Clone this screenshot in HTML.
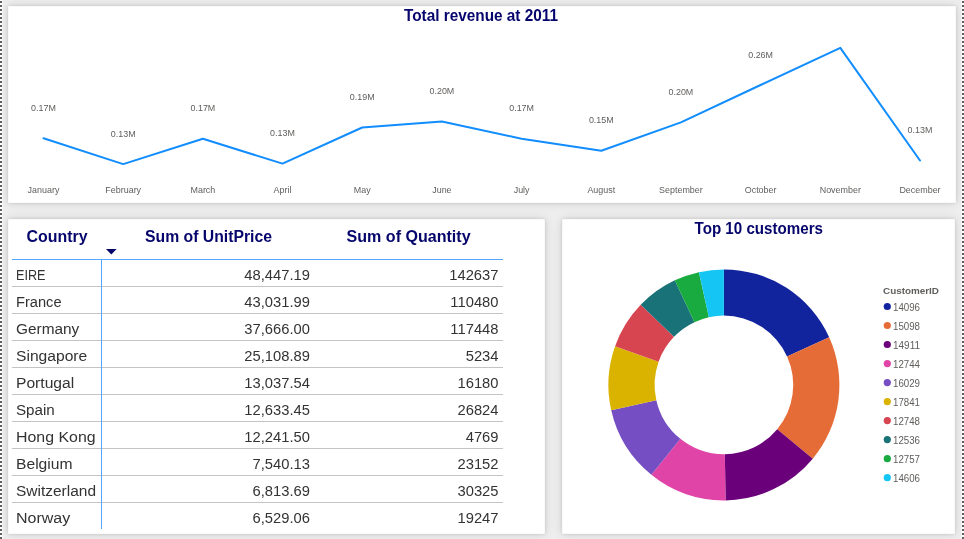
<!DOCTYPE html>
<html><head><meta charset="utf-8"><style>
html,body{margin:0;padding:0;}
body{width:964px;height:539px;overflow:hidden;background:#eeeeee;position:relative;font-family:"Liberation Sans",sans-serif;}
.dash{position:absolute;top:0;width:2px;height:539px;background:repeating-linear-gradient(to bottom,#fff 0,#fff 1px,#606060 1px,#606060 3px,#fff 3px,#fff 4px);}
.card{position:absolute;background:#fff;box-shadow:0 0 3px rgba(0,0,0,0.12),0 0 10px rgba(0,0,0,0.12),inset 0 0 1px rgba(0,0,0,0.25);}
svg{position:absolute;left:0;top:0;will-change:transform;}
</style></head><body>
<div class="dash" style="left:0"></div>
<div class="dash" style="left:962px"></div>
<div style="position:absolute;top:0;left:2px;width:1px;height:539px;background:rgba(255,255,255,0.55)"></div>
<div style="position:absolute;top:0;left:961px;width:1px;height:539px;background:rgba(255,255,255,0.55)"></div>
<div class="card" style="left:8px;top:6px;width:948px;height:197px"></div>
<div class="card" style="left:8px;top:219px;width:537px;height:315px"></div>
<div class="card" style="left:562px;top:219px;width:393px;height:315px"></div>
<svg width="964" height="539" viewBox="0 0 964 539" font-family="Liberation Sans">
<text x="404" y="20.6" font-weight="bold" font-size="17" fill="#05056c" textLength="154" lengthAdjust="spacingAndGlyphs">Total revenue at 2011</text>
<polyline points="43.5,138.2 123.2,164.1 202.9,138.8 282.5,163.6 362.2,127.5 441.9,121.5 521.6,138.8 601.3,150.8 680.9,122.4 760.6,85.0 840.3,47.8 920.0,160.5" fill="none" stroke="#118dff" stroke-width="2" stroke-linejoin="round" stroke-linecap="round"/>
<g font-size="9.6" fill="#605e5c" text-anchor="middle"><text transform="translate(43.5 110.70) scale(0.93 1)">0.17M</text><text transform="translate(123.2 136.60) scale(0.93 1)">0.13M</text><text transform="translate(202.9 111.30) scale(0.93 1)">0.17M</text><text transform="translate(282.5 136.10) scale(0.93 1)">0.13M</text><text transform="translate(362.2 100.00) scale(0.93 1)">0.19M</text><text transform="translate(441.9 94.00) scale(0.93 1)">0.20M</text><text transform="translate(521.6 111.30) scale(0.93 1)">0.17M</text><text transform="translate(601.3 123.30) scale(0.93 1)">0.15M</text><text transform="translate(680.9 94.90) scale(0.93 1)">0.20M</text><text transform="translate(760.6 57.50) scale(0.93 1)">0.26M</text><text transform="translate(920.0 133.00) scale(0.93 1)">0.13M</text><text transform="translate(43.5 193) scale(0.93 1)">January</text><text transform="translate(123.2 193) scale(0.93 1)">February</text><text transform="translate(202.9 193) scale(0.93 1)">March</text><text transform="translate(282.5 193) scale(0.93 1)">April</text><text transform="translate(362.2 193) scale(0.93 1)">May</text><text transform="translate(441.9 193) scale(0.93 1)">June</text><text transform="translate(521.6 193) scale(0.93 1)">July</text><text transform="translate(601.3 193) scale(0.93 1)">August</text><text transform="translate(680.9 193) scale(0.93 1)">September</text><text transform="translate(760.6 193) scale(0.93 1)">October</text><text transform="translate(840.3 193) scale(0.93 1)">November</text><text transform="translate(920.0 193) scale(0.93 1)">December</text></g>
<g font-weight="bold" font-size="16" fill="#05056c">
<text x="26.5" y="241.8" textLength="61" lengthAdjust="spacingAndGlyphs">Country</text><text x="145" y="241.8" textLength="127" lengthAdjust="spacingAndGlyphs">Sum of UnitPrice</text><text x="346.6" y="241.8" textLength="124" lengthAdjust="spacingAndGlyphs">Sum of Quantity</text></g>
<path d="M106 249L116.6 249L111.3 254.4Z" fill="#05056c"/>
<g stroke="#c4c4c4" stroke-width="1"><line x1="12" y1="286.5" x2="503" y2="286.5"/><line x1="12" y1="313.5" x2="503" y2="313.5"/><line x1="12" y1="340.5" x2="503" y2="340.5"/><line x1="12" y1="367.5" x2="503" y2="367.5"/><line x1="12" y1="394.5" x2="503" y2="394.5"/><line x1="12" y1="421.5" x2="503" y2="421.5"/><line x1="12" y1="448.5" x2="503" y2="448.5"/><line x1="12" y1="475.5" x2="503" y2="475.5"/><line x1="12" y1="502.5" x2="503" y2="502.5"/></g>
<line x1="12" y1="259.5" x2="503" y2="259.5" stroke="#52a7ff" stroke-width="1"/>
<line x1="101.5" y1="259.5" x2="101.5" y2="529" stroke="#52a7ff" stroke-width="1"/>
<g font-size="15.4" fill="#333">
<text x="16" y="279.6" textLength="29.5" lengthAdjust="spacingAndGlyphs">EIRE</text><text x="16" y="306.6" textLength="45.6" lengthAdjust="spacingAndGlyphs">France</text><text x="16" y="333.6" textLength="63.3" lengthAdjust="spacingAndGlyphs">Germany</text><text x="16" y="360.6" textLength="71.2" lengthAdjust="spacingAndGlyphs">Singapore</text><text x="16" y="387.6" textLength="58.2" lengthAdjust="spacingAndGlyphs">Portugal</text><text x="16" y="414.6" textLength="38.8" lengthAdjust="spacingAndGlyphs">Spain</text><text x="16" y="441.6" textLength="79.6" lengthAdjust="spacingAndGlyphs">Hong Kong</text><text x="16" y="468.6" textLength="56.5" lengthAdjust="spacingAndGlyphs">Belgium</text><text x="16" y="495.6" textLength="80" lengthAdjust="spacingAndGlyphs">Switzerland</text><text x="16" y="522.6" textLength="54.2" lengthAdjust="spacingAndGlyphs">Norway</text><g transform="translate(310 0) scale(0.958 1) translate(-310 0)"><text x="310" y="279.6" text-anchor="end">48,447.19</text><text x="310" y="306.6" text-anchor="end">43,031.99</text><text x="310" y="333.6" text-anchor="end">37,666.00</text><text x="310" y="360.6" text-anchor="end">25,108.89</text><text x="310" y="387.6" text-anchor="end">13,037.54</text><text x="310" y="414.6" text-anchor="end">12,633.45</text><text x="310" y="441.6" text-anchor="end">12,241.50</text><text x="310" y="468.6" text-anchor="end">7,540.13</text><text x="310" y="495.6" text-anchor="end">6,813.69</text><text x="310" y="522.6" text-anchor="end">6,529.06</text></g><g transform="translate(498.5 0) scale(0.958 1) translate(-498.5 0)"><text x="498.5" y="279.6" text-anchor="end">142637</text><text x="498.5" y="306.6" text-anchor="end">110480</text><text x="498.5" y="333.6" text-anchor="end">117448</text><text x="498.5" y="360.6" text-anchor="end">5234</text><text x="498.5" y="387.6" text-anchor="end">16180</text><text x="498.5" y="414.6" text-anchor="end">26824</text><text x="498.5" y="441.6" text-anchor="end">4769</text><text x="498.5" y="468.6" text-anchor="end">23152</text><text x="498.5" y="495.6" text-anchor="end">30325</text><text x="498.5" y="522.6" text-anchor="end">19247</text></g></g>
<text x="694.5" y="234" font-weight="bold" font-size="16.5" fill="#05056c" textLength="128.5" lengthAdjust="spacingAndGlyphs">Top 10 customers</text>
<path d="M723.90 269.40A115.5 115.5 0 0 1 829.17 337.37L787.06 356.38A69.3 69.3 0 0 0 723.90 315.60Z" fill="#12239e"/>
<path d="M829.17 337.37A115.5 115.5 0 0 1 812.77 458.68L777.22 429.17A69.3 69.3 0 0 0 787.06 356.38Z" fill="#e66c37"/>
<path d="M812.77 458.68A115.5 115.5 0 0 1 725.51 500.39L724.87 454.19A69.3 69.3 0 0 0 777.22 429.17Z" fill="#6b007b"/>
<path d="M725.51 500.39A115.5 115.5 0 0 1 651.37 474.79L680.38 438.83A69.3 69.3 0 0 0 724.87 454.19Z" fill="#e044a7"/>
<path d="M651.37 474.79A115.5 115.5 0 0 1 611.23 410.29L656.30 400.14A69.3 69.3 0 0 0 680.38 438.83Z" fill="#744ec2"/>
<path d="M611.23 410.29A115.5 115.5 0 0 1 615.09 346.16L658.62 361.65A69.3 69.3 0 0 0 656.30 400.14Z" fill="#d9b300"/>
<path d="M615.09 346.16A115.5 115.5 0 0 1 640.68 304.81L673.97 336.85A69.3 69.3 0 0 0 658.62 361.65Z" fill="#d64550"/>
<path d="M640.68 304.81A115.5 115.5 0 0 1 674.81 280.35L694.45 322.17A69.3 69.3 0 0 0 673.97 336.85Z" fill="#197278"/>
<path d="M674.81 280.35A115.5 115.5 0 0 1 698.90 272.14L708.90 317.24A69.3 69.3 0 0 0 694.45 322.17Z" fill="#1aab40"/>
<path d="M698.90 272.14A115.5 115.5 0 0 1 723.90 269.40L723.90 315.60A69.3 69.3 0 0 0 708.90 317.24Z" fill="#15c6f4"/>
<text x="883" y="294.3" font-weight="bold" font-size="9.6" fill="#605e5c" textLength="56" lengthAdjust="spacingAndGlyphs">CustomerID</text>
<g font-size="10" fill="#605e5c"><circle cx="887.3" cy="306.5" r="3.6" fill="#12239e"/><text x="893" y="311.0" textLength="27" lengthAdjust="spacingAndGlyphs">14096</text><circle cx="887.3" cy="325.5" r="3.6" fill="#e66c37"/><text x="893" y="330.0" textLength="27" lengthAdjust="spacingAndGlyphs">15098</text><circle cx="887.3" cy="344.5" r="3.6" fill="#6b007b"/><text x="893" y="349.0" textLength="27" lengthAdjust="spacingAndGlyphs">14911</text><circle cx="887.3" cy="363.6" r="3.6" fill="#e044a7"/><text x="893" y="368.1" textLength="27" lengthAdjust="spacingAndGlyphs">12744</text><circle cx="887.3" cy="382.6" r="3.6" fill="#744ec2"/><text x="893" y="387.1" textLength="27" lengthAdjust="spacingAndGlyphs">16029</text><circle cx="887.3" cy="401.6" r="3.6" fill="#d9b300"/><text x="893" y="406.1" textLength="27" lengthAdjust="spacingAndGlyphs">17841</text><circle cx="887.3" cy="420.6" r="3.6" fill="#d64550"/><text x="893" y="425.1" textLength="27" lengthAdjust="spacingAndGlyphs">12748</text><circle cx="887.3" cy="439.6" r="3.6" fill="#197278"/><text x="893" y="444.1" textLength="27" lengthAdjust="spacingAndGlyphs">12536</text><circle cx="887.3" cy="458.7" r="3.6" fill="#1aab40"/><text x="893" y="463.2" textLength="27" lengthAdjust="spacingAndGlyphs">12757</text><circle cx="887.3" cy="477.7" r="3.6" fill="#15c6f4"/><text x="893" y="482.2" textLength="27" lengthAdjust="spacingAndGlyphs">14606</text></g>
</svg>
</body></html>
